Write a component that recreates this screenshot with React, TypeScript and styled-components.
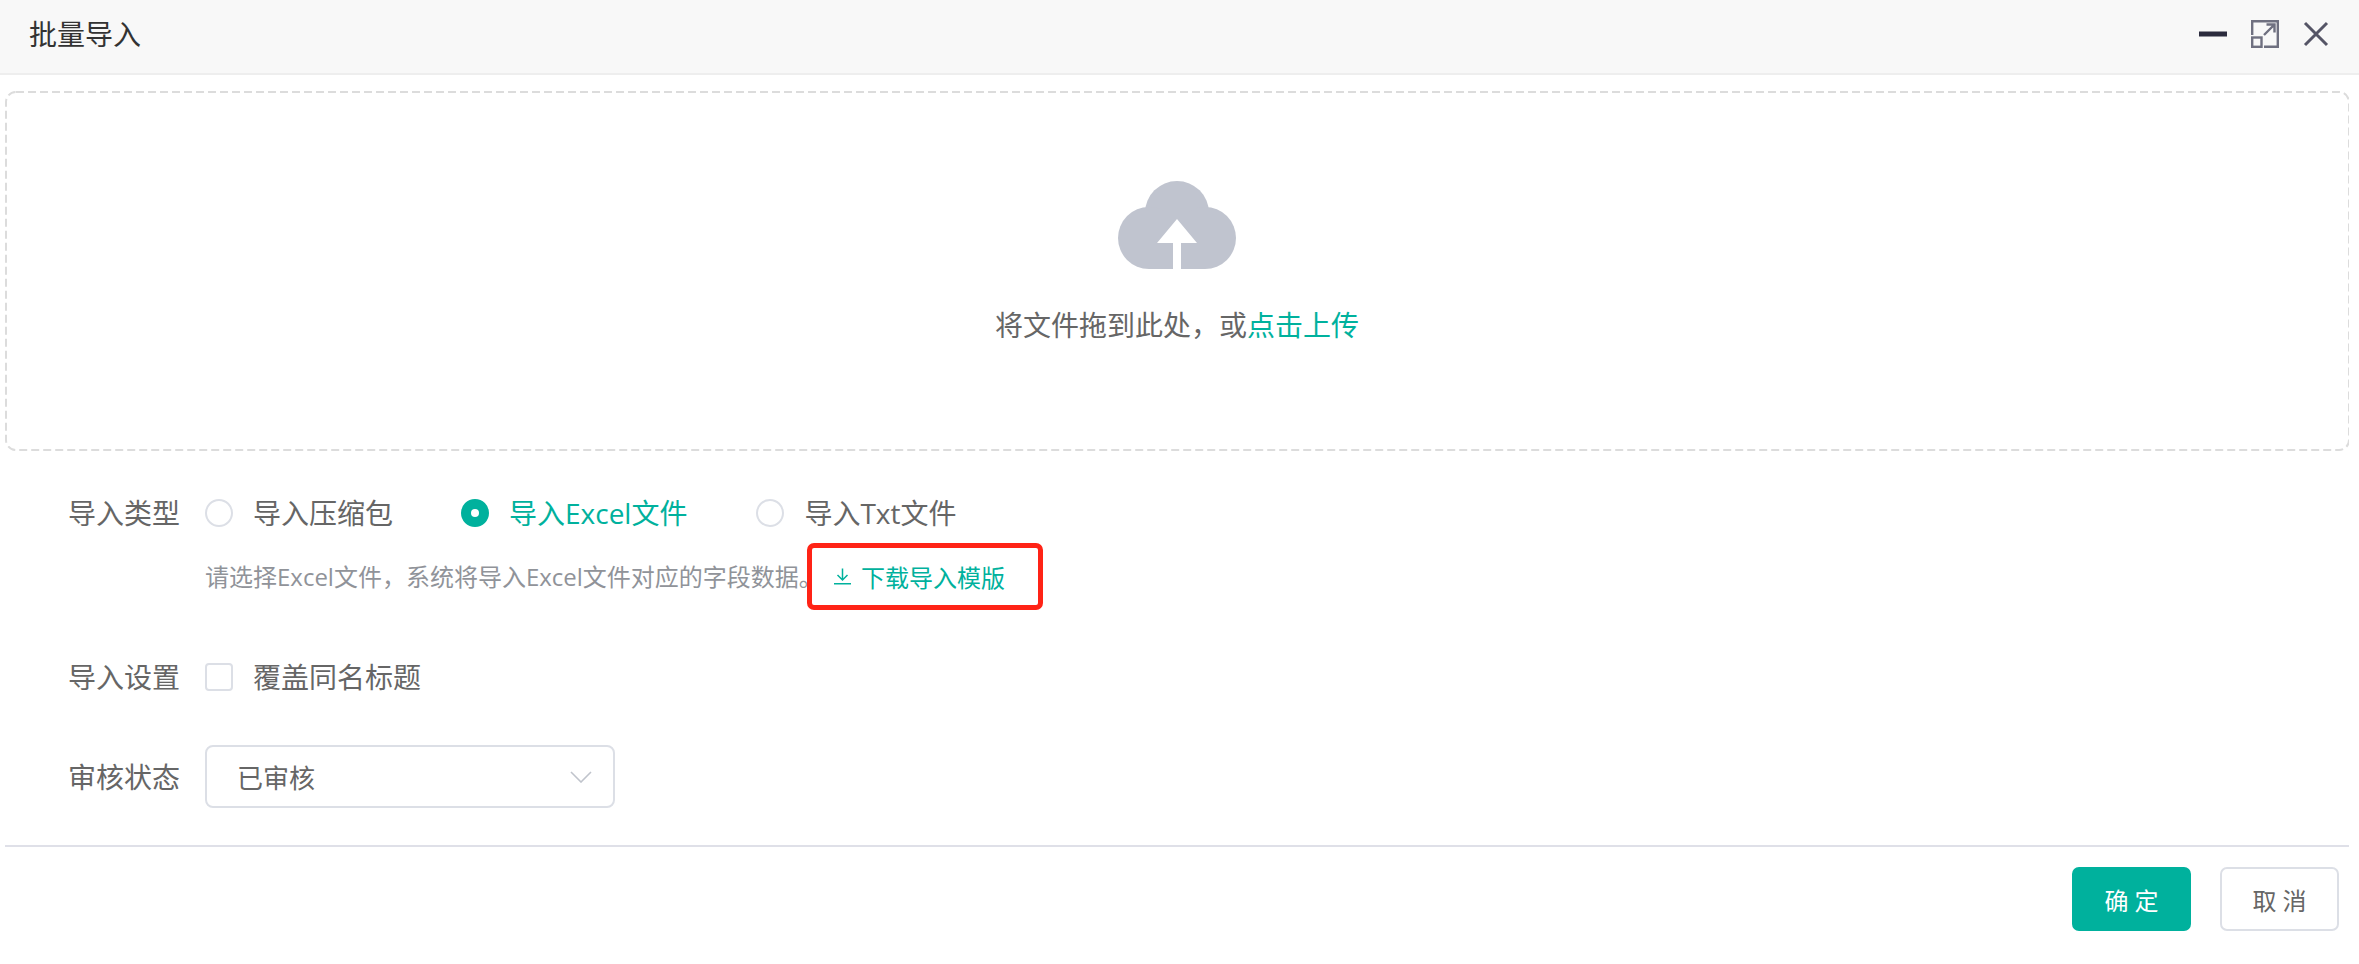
import styled, { createGlobalStyle } from 'styled-components'

const GlobalStyle = createGlobalStyle`
	html, body {
		margin: 0;
		padding: 0;
		background: #fff;
	}
	body {
		font-family: 'Open Sans', 'Noto Sans CJK SC', sans-serif;
		color: #666;
	}
	* {
		box-sizing: border-box;
	}
`

const Dialog = styled.div`
	display: flex;
	flex-direction: column;
	width: 2359px;
	height: 964px;
	overflow: hidden;
`

const Header = styled.header`
	display: flex;
	align-items: center;
	justify-content: space-between;
	height: 75px;
	padding: 0 30px 6px 29px;
	background: #f8f8f8;
	border-bottom: 2px solid #eeeeee;
`

const Title = styled.h1`
	margin: 0;
	font-size: 28px;
	font-weight: 400;
	line-height: 40px;
	color: #333;
`

const HeaderTools = styled.div`
	display: flex;
	align-items: center;
	gap: 24px;
`

// the dashes are longer than what border: dashed gives
const dashedFrame = encodeURIComponent(
	"<svg xmlns='http://www.w3.org/2000/svg' width='2345' height='360'><rect x='1' y='1' width='2343' height='358' rx='10' fill='none' stroke='#dcdcdc' stroke-width='2' stroke-dasharray='8 4'/></svg>"
)

const DropZone = styled.div`
	display: flex;
	flex-direction: column;
	align-items: center;
	height: 360px;
	margin: 16px 10px 0 5px;
	padding-top: 90px;
	background: url("data:image/svg+xml,${dashedFrame}") no-repeat;
`

const DropText = styled.div`
	margin-top: 36px;
	font-size: 28px;
	line-height: 40px;
	color: #666;
`

const Accent = styled.span`
	color: #00b19d;
`

const Form = styled.div`
	display: flex;
	flex-direction: column;
	padding-left: 68px;
	margin-top: 42px;
`

const Row = styled.div<{ $top?: number }>`
	display: flex;
	align-items: center;
	min-height: 40px;
	margin-top: ${p => p.$top ?? 0}px;
`

const Label = styled.label`
	flex: none;
	width: 137px;
	font-size: 28px;
	line-height: 40px;
	color: #666;
`

const RadioItem = styled.div<{ $checked?: boolean }>`
	display: flex;
	align-items: center;
	gap: 20px;
	margin-right: ${p => (p.$checked ? 69 : 68)}px;
	font-size: 28px;
	line-height: 40px;
	color: ${p => (p.$checked ? '#00b19d' : '#666')};
`

const RadioDot = styled.span<{ $checked?: boolean }>`
	display: flex;
	align-items: center;
	justify-content: center;
	width: 28px;
	height: 28px;
	border-radius: 50%;
	border: 2px solid ${p => (p.$checked ? '#00b19d' : '#dcdfe6')};
	background: ${p => (p.$checked ? '#00b19d' : '#fff')};

	&::after {
		content: '';
		display: ${p => (p.$checked ? 'block' : 'none')};
		width: 8px;
		height: 8px;
		border-radius: 50%;
		background: #fff;
	}
`

const HintRow = styled.div`
	display: flex;
	align-items: center;
	margin: 10px 0 0 137px;
`

const Hint = styled.span`
	flex: none;
	width: 602px;
	font-size: 24px;
	line-height: 36px;
	white-space: nowrap;
	color: #909399;
`

const DownloadLink = styled.a`
	display: flex;
	align-items: center;
	gap: 10px;
	width: 236px;
	height: 67px;
	padding-left: 22px;
	border: 5px solid #ff2316;
	border-radius: 7px;
	font-size: 24px;
	color: #00b19d;
`

const CheckItem = styled.div`
	display: flex;
	align-items: center;
	gap: 20px;
	font-size: 28px;
	line-height: 40px;
	color: #666;
`

const CheckBox = styled.span`
	width: 28px;
	height: 28px;
	border: 2px solid #dcdfe6;
	border-radius: 4px;
	background: #fff;
`

const Select = styled.div`
	display: flex;
	align-items: center;
	justify-content: space-between;
	width: 410px;
	height: 63px;
	padding: 0 21px 0 30px;
	border: 2px solid #dcdfe6;
	border-radius: 8px;
	font-size: 26px;
	color: #666;
`

const Divider = styled.div`
	height: 2px;
	margin: 37px 10px 0 5px;
	background: #dfe0e8;
`

const Footer = styled.footer`
	display: flex;
	justify-content: flex-end;
	gap: 29px;
	padding: 20px 20px 0 0;
`

const Button = styled.button<{ $primary?: boolean }>`
	width: 119px;
	height: 64px;
	padding: 0;
	border: 2px solid ${p => (p.$primary ? '#00b19d' : '#dcdfe6')};
	border-radius: 7px;
	background: ${p => (p.$primary ? '#00b19d' : '#fff')};
	color: ${p => (p.$primary ? '#fff' : '#666')};
	font-family: inherit;
	font-size: 24px;
`

const App = () => {
	return (
		<Dialog>
			<GlobalStyle />
			<Header>
				<Title>批量导入</Title>
				<HeaderTools>
					<svg width='28' height='6' viewBox='0 0 28 6'>
						<rect width='28' height='5' y='0.5' fill='#2b2b3d' />
					</svg>
					<svg width='28' height='28' viewBox='0 0 28 28' fill='none' stroke='#6f7080' strokeWidth='2.4'>
						<path d='M1.2 15V1.2H26.8V26.8H13' />
						<rect x='1.2' y='17.5' width='9.3' height='9.3' />
						<path d='M13 15L23 5M15.5 4.5H23.5V12.5' />
					</svg>
					<svg width='26' height='26' viewBox='0 0 26 26' fill='none' stroke='#555566' strokeWidth='3'>
						<path d='M2 2L24 24M24 2L2 24' />
					</svg>
				</HeaderTools>
			</Header>

			<DropZone>
				<svg width='118' height='88' viewBox='0 0 118 88'>
					<g fill='#c0c4cf'>
						<circle cx='59' cy='32' r='32' />
						<circle cx='31' cy='57' r='31' />
						<circle cx='87' cy='57' r='31' />
						<rect x='31' y='50' width='56' height='38' />
					</g>
					<path fill='#fff' d='M59 38L39 62H55V88H63V62H79Z' />
				</svg>
				<DropText>
					将文件拖到此处，或<Accent>点击上传</Accent>
				</DropText>
			</DropZone>

			<Form>
				<Row>
					<Label>导入类型</Label>
					<RadioItem>
						<RadioDot />
						导入压缩包
					</RadioItem>
					<RadioItem $checked>
						<RadioDot $checked />
						导入Excel文件
					</RadioItem>
					<RadioItem>
						<RadioDot />
						导入Txt文件
					</RadioItem>
				</Row>
				<HintRow>
					<Hint>请选择Excel文件，系统将导入Excel文件对应的字段数据。</Hint>
					<DownloadLink>
						<svg width='17' height='17' viewBox='0 0 17 17' fill='none' stroke='#00b19d' strokeWidth='1.5'>
							<path d='M8.5 0.5V11.5M3.5 7L8.5 12L13.5 7M0 15.8H17' />
						</svg>
						下载导入模版
					</DownloadLink>
				</HintRow>
				<Row $top={47}>
					<Label>导入设置</Label>
					<CheckItem>
						<CheckBox />
						覆盖同名标题
					</CheckItem>
				</Row>
				<Row $top={48}>
					<Label>审核状态</Label>
					<Select>
						已审核
						<svg width='22' height='12' viewBox='0 0 22 12' fill='none' stroke='#c0c4cc' strokeWidth='1.6'>
							<path d='M1 1L11 11L21 1' />
						</svg>
					</Select>
				</Row>
			</Form>

			<Divider />
			<Footer>
				<Button $primary>确 定</Button>
				<Button>取 消</Button>
			</Footer>
		</Dialog>
	)
}

export default App
